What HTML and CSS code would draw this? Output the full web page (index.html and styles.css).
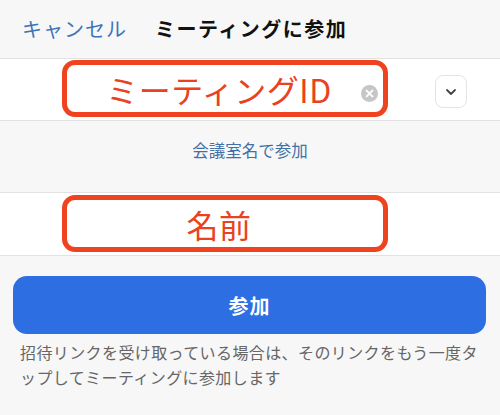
FILE: index.html
```html
<!DOCTYPE html>
<html lang="ja">
<head>
<meta charset="utf-8">
<link rel="stylesheet" href="styles.css">
</head>
<body>
<header class="nav">
  <span class="cancel">キャンセル</span>
  <span class="title">ミーティングに参加</span>
</header>
<div class="row row-id">
  <div class="field">
    <span class="field-text">ミーティングID</span>
    <span class="clear">
      <svg width="17" height="17" viewBox="0 0 17 17"><circle cx="8.5" cy="8.5" r="8.5" fill="#c6c6c6"/><path d="M5.6 5.6 L11.4 11.4 M11.4 5.6 L5.6 11.4" stroke="#fff" stroke-width="2" stroke-linecap="round"/></svg>
    </span>
  </div>
  <div class="drop">
    <svg width="12" height="8" viewBox="0 0 12 8"><path d="M2 2 L6 6 L10 2" fill="none" stroke="#444" stroke-width="1.8" stroke-linecap="round" stroke-linejoin="round"/></svg>
  </div>
</div>
<div class="link-area">
  <span class="link">会議室名で参加</span>
</div>
<div class="row row-name">
  <div class="field">
    <span class="field-text">名前</span>
  </div>
</div>
<div class="actions">
  <button class="join">参加</button>
  <p class="help">招待リンクを受け取っている場合は、そのリンクをもう一度タップしてミーティングに参加します</p>
</div>
</body>
</html>
```
FILE: styles.css
```css
* { box-sizing: border-box; }
html, body { margin: 0; padding: 0; }
body {
  width: 500px;
  height: 415px;
  overflow: hidden;
  background: #f7f7f7;
  font-family: "Noto Sans CJK JP", "Noto Sans", sans-serif;
}
.nav {
  height: 59px;
  border-bottom: 1px solid #e2e2e2;
  display: flex;
  align-items: center;
  padding: 0 0 1px 22px;
  background: #f7f7f7;
}
.cancel {
  font-size: 20px;
  color: #3d74b8;
  letter-spacing: 1px;
}
.title {
  margin-left: 28px;
  font-size: 20px;
  font-weight: 700;
  color: #111;
  letter-spacing: 1.5px;
}
.row {
  background: #fff;
  display: flex;
  align-items: flex-start;
  padding-left: 62px;
}
.row-id {
  height: 62px;
  border-bottom: 1px solid #e2e2e2;
  padding-top: 1px;
}
.row-id .drop { margin-top: 15px; }
.row-name {
  height: 64px;
  border-top: 1px solid #e2e2e2;
  border-bottom: 1px solid #e2e2e2;
  padding-top: 2px;
}
.field {
  position: relative;
  width: 326px;
  height: 57px;
  border: 5px solid #ef4320;
  border-radius: 13px;
  display: flex;
  align-items: center;
  justify-content: center;
  padding-right: 12px;
  background: #fff;
}
.field-text {
  font-size: 32px;
  color: #ea4220;
  line-height: 1;
  letter-spacing: 0.5px;
}
.clear {
  position: absolute;
  right: 5px;
  top: 20px;
  width: 17px;
  height: 17px;
  display: flex;
}
.drop {
  margin-left: 47px;
  width: 32px;
  height: 33px;
  border: 1px solid #e4e4e4;
  border-radius: 8px;
  display: flex;
  align-items: center;
  justify-content: center;
}
.link-area {
  height: 71px;
  display: flex;
  justify-content: center;
  padding-top: 17px;
}
.link {
  font-size: 16.5px;
  color: #3f71a8;
  line-height: 24px;
}
.actions {
  padding: 20px 14px 0 13px;
}
.join {
  display: block;
  width: 100%;
  height: 58px;
  border: none;
  border-radius: 14px;
  background: #2d6fe2;
  color: #fff;
  font-family: inherit;
  font-size: 20px;
  font-weight: 700;
  letter-spacing: 1px;
}
.help {
  margin: 6px 0 0 7px;
  font-size: 16px;
  letter-spacing: 0.4px;
  line-height: 25px;
  color: #666;
}
```
